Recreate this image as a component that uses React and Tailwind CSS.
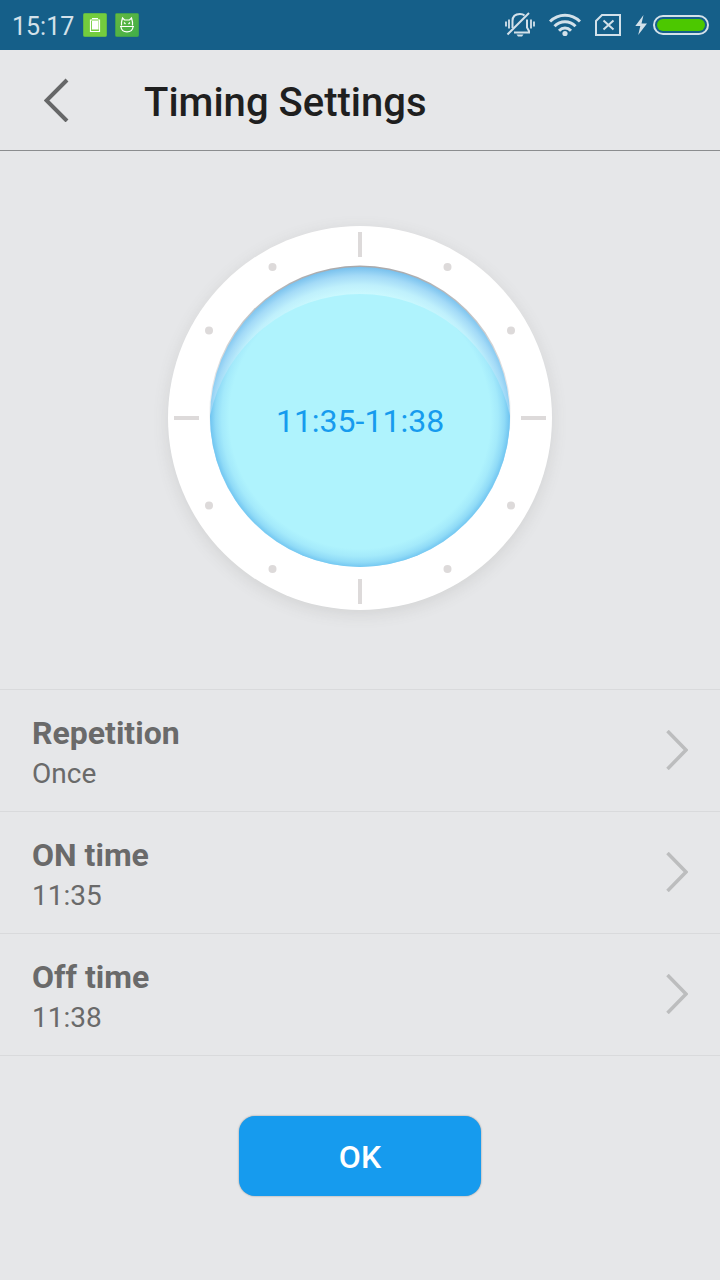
const HOUR_DOTS = [
  [279.5, 41], [343, 104.5], [343, 279.5], [279.5, 343],
  [104.5, 343], [41, 279.5], [41, 104.5], [104.5, 41],
];

const SETTINGS = [
  { id: 'repetition', label: 'Repetition', value: 'Once' },
  { id: 'on', label: 'ON time', value: '11:35' },
  { id: 'off', label: 'Off time', value: '11:38' },
];

const BatteryAppIcon = () => (
  <svg width="24" height="24" viewBox="0 0 24 24" aria-hidden="true">
    <rect x="0.5" y="0.5" width="23" height="23" rx="1" fill="#74cc3d" stroke="#5fb648" />
    <path d="M9 5.5h6M7.5 7h9v11.5h-9z" fill="none" stroke="#fff" strokeWidth="1.2" />
    <path d="M9 8h6.5v8.5H9z" fill="#fff" />
  </svg>
);

const CatAppIcon = () => (
  <svg width="24" height="24" viewBox="0 0 24 24" aria-hidden="true">
    <defs>
      <linearGradient id="cat-bg" x1="0" y1="0" x2="1" y2="1">
        <stop offset="0" stopColor="#66b840" />
        <stop offset="1" stopColor="#3fae49" />
      </linearGradient>
    </defs>
    <rect x="0.5" y="0.5" width="23" height="23" rx="1" fill="url(#cat-bg)" stroke="#3fa04f" />
    <g fill="none" stroke="#fff" strokeWidth="1.2">
      <path d="M6.5 12.5V9L7.5 5l2 2h5l2-2 1 4v3.5" />
      <path d="M5 13.5h14M6 14c.3 3 2.6 4.8 6 4.8s5.7-1.8 6-4.8" />
      <path d="M9 9.5l1.5 1.5M15 9.5L13.5 11" />
    </g>
  </svg>
);

const MutedBellIcon = () => (
  <svg width="30" height="26" viewBox="0 0 30 26" fill="none" stroke="#d3e1ea" aria-hidden="true">
    <path d="M1 9.5v5M4 7.5v9M26 7.5v9M29 9.5v5" strokeWidth="1.8" />
    <path d="M7.5 16V9c0-4.5 3-7 7.5-7 2 0 3.5.5 4.5 1.5" strokeWidth="2" />
    <path d="M22 7.5V15.5l2 3.5v1.5H9" strokeWidth="2" />
    <path d="M2.5 22.5L24 1" strokeWidth="2" />
    <path d="M11.5 22.5h7l-1.5 2h-4z" fill="#d3e1ea" stroke="none" />
  </svg>
);

const WifiIcon = () => (
  <svg width="32" height="24" viewBox="0 0 32 24" fill="none" stroke="#d3e1ea" strokeWidth="3" aria-hidden="true">
    <path d="M1 8.5C9.500 0 22.500 0 31 8.500" />
    <path d="M5.5 13.2c6-6 15-6 21 0" />
    <path d="M10 17.7c3.500-3.600 8.500-3.600 12 0" />
    <circle cx="16" cy="20.5" r="2.6" fill="#d3e1ea" stroke="none" />
  </svg>
);

const NoSimIcon = () => (
  <svg width="26" height="22" viewBox="0 0 26 22" fill="none" stroke="#d3e1ea" strokeWidth="2" aria-hidden="true">
    <path d="M7 1h18v20H1V7z" />
    <path d="M8.5 6.5l10 9M18.5 6.5l-10 9" />
  </svg>
);

const ChargingBattery = () => (
  <div className="flex items-center gap-1.5">
    <svg width="12" height="20" viewBox="0 0 12 20" fill="#d3e1ea" aria-hidden="true">
      <path d="M8.5 0L.3 11h5L3.2 20 12 8.5H6.5z" />
    </svg>
    <svg width="56" height="20" viewBox="0 0 56 20" aria-hidden="true">
      <rect x="1" y="1" width="54" height="18" rx="9" fill="none" stroke="#d3e1ea" strokeWidth="2" />
      <rect x="4" y="4" width="48" height="12" rx="6" fill="#4cc800" />
    </svg>
  </div>
);

const StatusBar = () => (
  <div className="flex h-[50px] items-center justify-between bg-[#155f89] pr-[11px] pl-3">
    <div className="flex items-center gap-2">
      <span className="w-[63px] pt-1 text-[25px] leading-8 text-[#d3e1ea]">15:17</span>
      <BatteryAppIcon />
      <CatAppIcon />
    </div>
    <div className="flex items-center gap-3.5">
      <MutedBellIcon />
      <WifiIcon />
      <NoSimIcon />
      <ChargingBattery />
    </div>
  </div>
);

// Clock face, drawn on a 384px circle
const Dial = ({ range }) => (
  <div className="relative size-96 rounded-full bg-white shadow-[0_4px_16px_rgba(90,95,85,0.14)]">
    <svg className="size-full" viewBox="0 0 384 384" aria-hidden="true">
      <defs>
        <radialGradient id="dial-shade" gradientUnits="userSpaceOnUse" cx="192" cy="197" r="157">
          <stop offset="0.82" stopColor="#cbf9fe" />
          <stop offset="0.88" stopColor="#bff0fc" />
          <stop offset="0.94" stopColor="#a3daf7" />
          <stop offset="1" stopColor="#72bdec" />
        </radialGradient>
        <radialGradient id="dial-glow" gradientUnits="userSpaceOnUse" cx="192" cy="192" r="152">
          <stop offset="0.86" stopColor="#aff3fd" />
          <stop offset="0.91" stopColor="#a4eafb" />
          <stop offset="0.95" stopColor="#90dbf7" />
          <stop offset="1" stopColor="#62bbee" />
        </radialGradient>
        <linearGradient id="dial-rim" x1="0" y1="0" x2="0" y2="1">
          <stop offset="0" stopColor="#a9a9ab" />
          <stop offset="0.55" stopColor="#ffffff" />
        </linearGradient>
      </defs>
      <circle cx="192" cy="190.5" r="151" fill="url(#dial-rim)" />
      <circle cx="192" cy="191" r="150" fill="url(#dial-shade)" />
      {/* Front glass, leaves a crescent at the top */}
      <path
        d="M42 190A153.2 153.2 0 0 1 342 190A150 151 0 0 1 42 190Z"
        fill="url(#dial-glow)"
      />
      <path d="M192 6v25M192 353v25M6 192h25M353 192h25" stroke="#dddada" strokeWidth="4" />
      {HOUR_DOTS.map(([cx, cy]) => (
        <circle key={`${cx}-${cy}`} cx={cx} cy={cy} r="4" fill="#dddada" />
      ))}
    </svg>
    <div className="absolute inset-0 flex items-center justify-center pt-1.5 text-[32px] leading-10 text-[#169bee]">
      {range}
    </div>
  </div>
);

const SettingRow = ({ label, value }) => (
  <li className="border-b border-[#d9dadc]">
    <button type="button" className="flex w-full items-start justify-between px-8 text-left text-[#6a6a6a]">
      <span className="pt-[23px] pb-4">
        <span className="block text-[32px] leading-10 font-bold">{label}</span>
        <span className="block text-[28px] leading-[42px]">{value}</span>
      </span>
      <svg className="mt-10" width="22" height="40" viewBox="0 0 22 40" fill="none" stroke="#bcbdbe" strokeWidth="3.5" aria-hidden="true">
        <path d="M1.5 1L20 20L1.5 39" />
      </svg>
    </button>
  </li>
);

export default function App() {
  return (
    <div className="min-h-screen bg-[#e6e7e9] font-[Roboto,sans-serif]">
      <StatusBar />

      {/* Header */}
      <header className="flex items-center border-b border-[#8b8d8f] pl-11">
        <button type="button" aria-label="Back" className="w-[100px]">
          <svg width="25" height="44" viewBox="0 0 25 44" fill="none" stroke="#666768" strokeWidth="4" aria-hidden="true">
            <path d="M23 2L2.5 22.5L23 43" />
          </svg>
        </button>
        <h1 className="pt-[29px] pb-[23px] text-[40px] leading-12 font-medium text-[#1f1f1f]">Timing Settings</h1>
      </header>

      <main>
        <div className="flex justify-center pt-[75px] pb-[79px]">
          <Dial range="11:35-11:38" />
        </div>

        <ul className="border-t border-[#d9dadc]">
          {SETTINGS.map((item) => (
            <SettingRow key={item.id} label={item.label} value={item.value} />
          ))}
        </ul>

        <div className="flex justify-center pt-15">
          <button
            type="button"
            className="h-20 w-[242px] rounded-2xl bg-[#169bee] pt-0.5 text-[32px] font-medium text-white shadow-[0_0_2px_rgba(0,0,0,0.4)]"
          >
            OK
          </button>
        </div>
      </main>
    </div>
  );
}
